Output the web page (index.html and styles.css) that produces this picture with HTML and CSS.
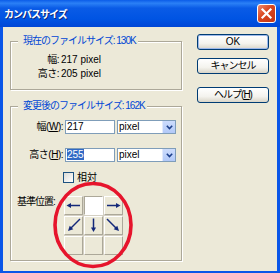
FILE: index.html
```html
<!DOCTYPE html>
<html lang="ja">
<head>
    <meta charset="UTF-8">
    <title>カンバスサイズ</title>
    <link rel="stylesheet" href="styles.css">
</head>
<body>

<div class="window">
    <div class="titlebar">
        <span class="title">カンバスサイズ</span>
        <span class="close">
            <svg width="17" height="17" viewBox="0 0 17 17">
                <path d="M4.5 4.5 L12.5 12.5 M12.5 4.5 L4.5 12.5" stroke="#fff" stroke-width="2.2" stroke-linecap="square"/>
            </svg>
        </span>
    </div>

    <div class="body">
        <div class="main">
            <fieldset class="group">
                <legend>現在のファイルサイズ: 130K</legend>
                <div class="info">
                    <span class="lbl">幅:</span><span>217 pixel</span>
                    <span class="lbl">高さ:</span><span>205 pixel</span>
                </div>
            </fieldset>

            <fieldset class="group after">
                <legend>変更後のファイルサイズ: 162K</legend>
                <div class="fields">
                    <span class="lbl">幅(<u>W</u>):</span>
                    <div class="textbox">217</div>
                    <div class="combo"><span class="value">pixel</span><span class="drop"><svg width="7" height="5" viewBox="0 0 7 5"><path d="M0.8 0.8 L3.5 3.5 L6.2 0.8" fill="none" stroke="#1d3f8a" stroke-width="1.6"/></svg></span></div>

                    <span class="lbl">高さ(<u>H</u>):</span>
                    <div class="textbox"><span class="sel">255</span></div>
                    <div class="combo"><span class="value">pixel</span><span class="drop"><svg width="7" height="5" viewBox="0 0 7 5"><path d="M0.8 0.8 L3.5 3.5 L6.2 0.8" fill="none" stroke="#1d3f8a" stroke-width="1.6"/></svg></span></div>
                </div>

                <div class="check"><span class="box"></span>相対</div>

                <div class="anchor">
                    <span class="anchor-label">基準位置:</span>
                    <div class="grid">
                        <div class="cell"><svg width="17" height="17" viewBox="0 0 17 17"><path d="M15 8.5 H5" class="shaft"/><polygon points="1.5,8.5 6,6 6,11" class="head"/></svg></div>
                        <div class="cell on"></div>
                        <div class="cell"><svg width="17" height="17" viewBox="0 0 17 17"><path d="M2 8.5 H12" class="shaft"/><polygon points="15.5,8.5 11,6 11,11" class="head"/></svg></div>
                        <div class="cell"><svg width="17" height="17" viewBox="0 0 17 17"><path d="M15 2 L5.5 11.5" class="shaft"/><polygon points="3,14 8.3,12.3 4.7,8.7" class="head"/></svg></div>
                        <div class="cell"><svg width="17" height="17" viewBox="0 0 17 17"><path d="M8.5 1.5 V11" class="shaft"/><polygon points="8.5,15 6,10.5 11,10.5" class="head"/></svg></div>
                        <div class="cell"><svg width="17" height="17" viewBox="0 0 17 17"><path d="M2 2 L11.5 11.5" class="shaft"/><polygon points="14,14 8.7,12.3 12.3,8.7" class="head"/></svg></div>
                        <div class="cell"></div>
                        <div class="cell"></div>
                        <div class="cell"></div>

                        <svg class="ring" width="84" height="88" viewBox="0 0 84 88">
                            <ellipse cx="42" cy="44" rx="38" ry="41.5" fill="none" stroke="#e6142c" stroke-width="3.6"/>
                        </svg>
                    </div>
                </div>
            </fieldset>
        </div>

        <div class="buttons">
            <div class="btn default">OK</div>
            <div class="btn">キャンセル</div>
            <div class="btn help">ヘルプ(<u>H</u>)</div>
        </div>
    </div>
</div>

</body>
</html>
```

FILE: styles.css
```css
body {
    margin: 0;
    font-family: "Liberation Sans", "Noto Sans CJK JP", sans-serif;
    font-size: 10px;
    color: #000;
}
.window {
    width: 280px;
    height: 273px;
    display: flex;
    flex-direction: column;
    background: #0a56e8;
}
.titlebar {
    height: 27px;
    flex: none;
    display: flex;
    align-items: center;
    padding: 0 4px;
    background: linear-gradient(#0b5ce8, #2b80f6 12%, #0a5be6 30%, #0054e3 70%, #0046d6);
}
.title {
    color: #fff;
    font-family: "Noto Sans CJK JP", sans-serif;
    font-weight: bold;
    font-size: 10px;
    letter-spacing: -1px;
    text-shadow: 1px 1px 0 #0a2a80;
}
.close {
    margin-left: auto;
    width: 17px;
    height: 17px;
    border: 1px solid #fff;
    border-radius: 3px;
    background: linear-gradient(135deg, #f08a6e, #d9461f 45%, #c23515);
    display: flex;
}
.body {
    flex: 1;
    margin: 0 3px 2px 3px;
    background: #ece9d8;
    display: flex;
    padding-left: 7px;
}
.main {
    width: 172px;
    padding-top: 8px;
}
.group {
    margin: 0;
    padding: 0;
    min-width: 0;
    border: 1px solid #aca899;
    box-shadow: 1px 1px 0 #fff, inset 1px 1px 0 #fff;
}
.group legend {
    margin-left: 7px;
    padding: 0 2px 0 5px;
    color: #0046d5;
    line-height: 12px;
    letter-spacing: -1px;
    background: #ece9d8;
}
.group.after {
    margin-top: 10px;
}
.info {
    display: grid;
    grid-template-columns: 48px auto;
    column-gap: 2px;
    padding: 6px 0 8px;
    line-height: 14px;
}
.lbl {
    text-align: right;
    letter-spacing: -0.5px;
}
.fields {
    display: grid;
    grid-template-columns: 52px 50px 59px;
    column-gap: 2px;
    row-gap: 14px;
    padding-top: 8px;
    line-height: 14px;
}
.textbox {
    height: 14px;
    box-sizing: border-box;
    border: 1px solid #7f9db9;
    background: #fff;
    padding-left: 1px;
    line-height: 12px;
}
.sel {
    background: #316ac5;
    color: #fff;
}
.combo {
    height: 14px;
    box-sizing: border-box;
    border: 1px solid #7f9db9;
    background: #fff;
    display: flex;
    line-height: 12px;
}
.combo .value {
    flex: 1;
    padding-left: 1px;
}
.combo .drop {
    width: 12px;
    background: linear-gradient(#cddcfc, #b2c9f8);
    border-left: 1px solid #e2eafc;
    display: flex;
    align-items: center;
    justify-content: center;
}
.check {
    display: flex;
    align-items: center;
    height: 11px;
    margin: 10px 0 0 52px;
    line-height: 11px;
}
.box {
    width: 11px;
    height: 11px;
    box-sizing: border-box;
    border: 1px solid #1c5180;
    background: linear-gradient(135deg, #dcdcd7, #fff);
    margin-right: 3px;
}
.anchor {
    display: flex;
    margin-top: 13px;
    padding-bottom: 5px;
}
.anchor-label {
    width: 47px;
    padding-left: 6px;
    line-height: 12px;
    letter-spacing: -1px;
}
.grid {
    position: relative;
    display: grid;
    grid-template-columns: repeat(3, 19px);
    grid-auto-rows: 19px;
    gap: 1px;
    background: #d4d0c3;
}
.cell {
    box-sizing: border-box;
    border: 1px solid;
    border-color: #fff #aca899 #aca899 #fff;
    background: #ece9d8;
}
.cell.on {
    background: #fff;
    border-color: #aca899 #fff #fff #aca899;
}
.shaft {
    stroke: #14297a;
    stroke-width: 1.5;
    fill: none;
}
.head {
    fill: #14297a;
}
.ring {
    position: absolute;
    left: -13px;
    top: -15px;
    pointer-events: none;
}
.buttons {
    width: 72px;
    margin-left: 15px;
    padding-top: 7px;
    display: flex;
    flex-direction: column;
}
.btn {
    height: 16px;
    box-sizing: border-box;
    border: 1px solid #003c74;
    border-radius: 3px;
    background: linear-gradient(#fff, #f4f3ee 60%, #d9d5c8);
    text-align: center;
    line-height: 14px;
    letter-spacing: -1px;
}
.btn + .btn {
    margin-top: 8px;
}
.btn.help {
    margin-top: 13px;
}
.btn.default {
    box-shadow: inset 0 0 0 1px #9db9eb;
    letter-spacing: 0;
}
```
